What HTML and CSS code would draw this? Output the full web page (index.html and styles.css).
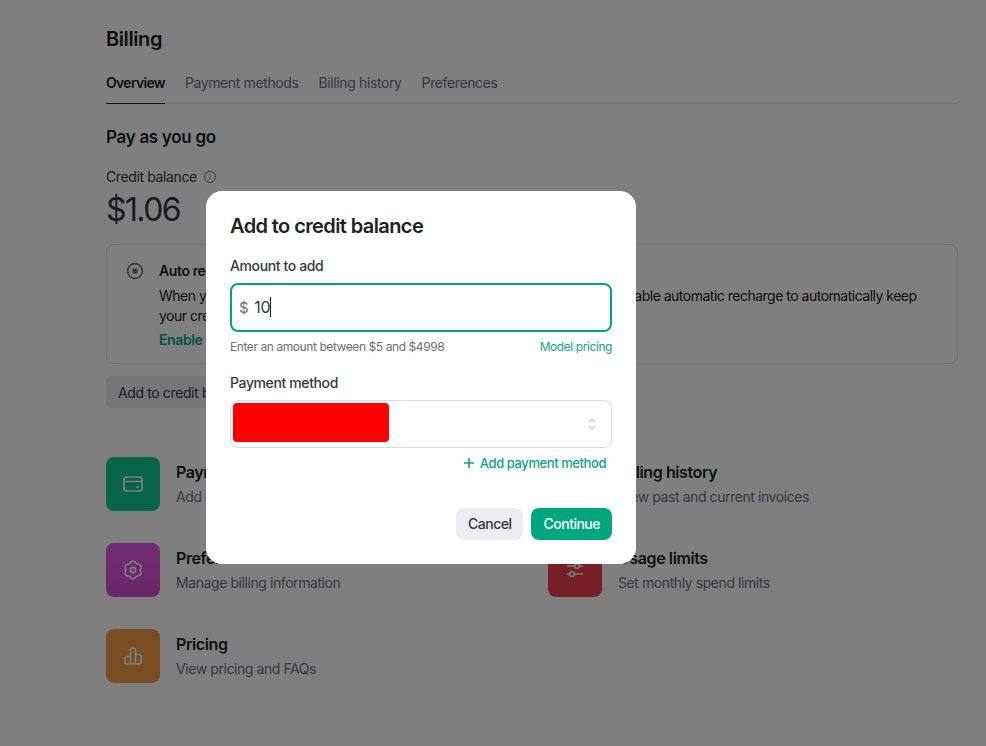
FILE: index.html
```html
<!DOCTYPE html>
<html>
<head>
  <title>Billing</title>
  <meta charset="UTF-8">
  <link rel="stylesheet" href="styles.css">
</head>
<body>
  <div class="page">
    <h1>Billing</h1>
    <div class="tabs">
      <a class="tab active">Overview</a>
      <a class="tab">Payment methods</a>
      <a class="tab">Billing history</a>
      <a class="tab">Preferences</a>
    </div>

    <h2>Pay as you go</h2>
    <div class="balance-label">
      Credit balance
      <svg width="14" height="14" viewBox="0 0 14 14" fill="none" stroke="currentColor" stroke-width="1">
        <circle cx="7" cy="7" r="5.5"/>
        <path d="M7 6.5v3M7 4.4v.8"/>
      </svg>
    </div>
    <div class="balance">$1.06</div>

    <div class="recharge">
      <svg class="recharge-icon" width="18" height="18" viewBox="0 0 18 18" fill="none" stroke="currentColor" stroke-width="1.6">
        <circle cx="9" cy="9" r="7.4"/>
        <rect x="6.5" y="6.5" width="5" height="5" rx="1" fill="currentColor" stroke="none"/>
      </svg>
      <div>
        <div class="recharge-title">Auto recharge is off</div>
        <p>When your credit balance reaches $0, your API requests will stop working. Enable automatic recharge to automatically keep your credit balance topped up.</p>
        <a class="recharge-link">Enable auto recharge</a>
      </div>
    </div>

    <button class="add-credit">Add to credit balance</button>

    <div class="cards">
      <div class="card">
        <div class="card-icon green">
          <svg width="20" height="20" viewBox="0 0 20 20" fill="none" stroke="currentColor" stroke-width="1.6">
            <rect x="1" y="3" width="18" height="14" rx="2.5"/>
            <path d="M1 7.5h18M13 13h3"/>
          </svg>
        </div>
        <div>
          <div class="card-title">Payment methods</div>
          <div class="card-sub">Add or change payment method</div>
        </div>
      </div>
      <div class="card">
        <div class="card-icon blue">
          <svg width="20" height="20" viewBox="0 0 20 20" fill="none" stroke="currentColor" stroke-width="1.6">
            <path d="M5 2h10v16l-2.500-1.500L10 18l-2.500-1.500L5 18z"/>
          </svg>
        </div>
        <div>
          <div class="card-title">Billing history</div>
          <div class="card-sub">View past and current invoices</div>
        </div>
      </div>
      <div class="card">
        <div class="card-icon purple">
          <svg width="20" height="20" viewBox="0 0 20 20" fill="none" stroke="currentColor" stroke-width="1.6" stroke-linejoin="round">
            <path d="M6.400 3.760Q10 -1.500 13.600 3.760Q19.960 4.250 17.200 10Q19.960 15.750 13.600 16.240Q10 21.500 6.400 16.240Q.040 15.750 2.800 10Q.040 4.250 6.400 3.760z"/>
            <circle cx="10" cy="10" r="2.600"/>
          </svg>
        </div>
        <div>
          <div class="card-title">Preferences</div>
          <div class="card-sub">Manage billing information</div>
        </div>
      </div>
      <div class="card">
        <div class="card-icon red">
          <svg width="20" height="20" viewBox="0 0 20 20" fill="none" stroke="currentColor" stroke-width="1.6">
            <circle cx="12" cy="6" r="2.300"/>
            <circle cx="7" cy="14" r="2.300"/>
            <path d="M2 6h7.700M14.300 6H18M2 14h2.700M9.300 14H18"/>
          </svg>
        </div>
        <div>
          <div class="card-title">Usage limits</div>
          <div class="card-sub">Set monthly spend limits</div>
        </div>
      </div>
      <div class="card">
        <div class="card-icon orange">
          <svg width="20" height="20" viewBox="0 0 20 20" fill="none" stroke="currentColor" stroke-width="1.6">
            <path d="M7.500 18V4a2 2 0 0 1 2-2h1a2 2 0 0 1 2 2v14zM12.500 18V8.500H16a2 2 0 0 1 2 2V16a2 2 0 0 1-2 2zM7.500 18V10.500H4a2 2 0 0 0-2 2V16a2 2 0 0 0 2 2z"/>
          </svg>
        </div>
        <div>
          <div class="card-title">Pricing</div>
          <div class="card-sub">View pricing and FAQs</div>
        </div>
      </div>
    </div>
  </div>

  <div class="overlay">
    <div class="modal">
      <div class="modal-title">Add to credit balance</div>

      <label>Amount to add</label>
      <div class="amount">
        <span class="dollar">$</span>
        <span class="amount-value">10</span>
        <span class="caret"></span>
      </div>
      <div class="amount-hint">
        <span>Enter an amount between $5 and $4998</span>
        <a>Model pricing</a>
      </div>

      <label class="method-label">Payment method</label>
      <div class="method">
        <div class="redacted"></div>
        <svg width="8" height="12" viewBox="0 0 8 12" fill="none" stroke="#c5c5d2" stroke-width="1.200">
          <path d="M1 4l3-3 3 3M1 8l3 3 3-3"/>
        </svg>
      </div>
      <div class="add-method">
        <svg width="12" height="12" viewBox="0 0 12 12" fill="none" stroke="currentColor" stroke-width="1.600">
          <path d="M6 1v10M1 6h10"/>
        </svg>
        Add payment method
      </div>

      <div class="modal-actions">
        <button class="btn-cancel">Cancel</button>
        <button class="btn-continue">Continue</button>
      </div>
    </div>
  </div>
</body>
</html>
```

FILE: styles.css
```css
body {
  margin: 0;
  height: 746px;
  overflow: hidden;
  background: #fff;
  color: #202123;
  font-family: Inter, "Liberation Sans", sans-serif;
  font-size: 14px;
  letter-spacing: -0.38px;
}
.page {
  width: 852px;
  margin-left: 106px;
  padding-top: 27px;
}
h1 {
  margin: 0;
  font-size: 20px;
  line-height: 24px;
  font-weight: 600;
  letter-spacing: -0.4px;
}
.tabs {
  display: flex;
  gap: 20px;
  margin-top: 22px;
  border-bottom: 1px solid #e5e5ea;
}
.tab {
  padding-bottom: 10px;
  margin-bottom: -1px;
  line-height: 20px;
  color: #6e6e80;
}
.tab.active {
  color: #202123;
  font-weight: 600;
  letter-spacing: -0.7px;
  border-bottom: 1px solid #202123;
}
h2 {
  margin: 22px 0 0;
  font-size: 17px;
  line-height: 22px;
  font-weight: 600;
  letter-spacing: -0.3px;
}
.balance-label {
  display: flex;
  align-items: center;
  gap: 6px;
  margin-top: 19px;
  line-height: 20px;
  color: #353740;
}
.balance-label svg {
  color: #6e6e80;
}
.balance {
  font-size: 32px;
  line-height: 40px;
  margin-top: 3px;
  color: #353740;
  letter-spacing: -1.6px;
}
.recharge {
  display: flex;
  gap: 15px;
  margin-top: 14px;
  padding: 15px 30px 13px 19px;
  border: 1px solid #e5e5ea;
  border-radius: 8px;
  line-height: 20px;
}
.recharge-icon {
  flex: none;
  margin-top: 2px;
  color: #6e6e80;
}
.recharge-title {
  font-weight: 600;
  line-height: 22px;
}
.recharge p {
  margin: 4px 0;
  letter-spacing: -0.5px;
}
.recharge-link {
  font-weight: 600;
  color: #10a37f;
}
.add-credit {
  display: block;
  margin-top: 12px;
  height: 32px;
  padding: 0 12px;
  border: none;
  border-radius: 5px;
  background: #ececf1;
  color: #353740;
  font: inherit;
  letter-spacing: inherit;
}
.cards {
  display: grid;
  grid-template-columns: 410px 410px;
  column-gap: 32px;
  row-gap: 32px;
  margin-top: 49px;
}
.card {
  display: flex;
  align-items: center;
  gap: 16px;
  height: 54px;
}
.card-icon {
  flex: none;
  display: flex;
  align-items: center;
  justify-content: center;
  width: 54px;
  height: 54px;
  border-radius: 8px;
  color: #fff;
}
.card-icon.green { background: #10c88f; }
.card-icon.blue { background: #3f7fe0; }
.card-icon.purple { background: linear-gradient(#e65ae8, #d04ed0); }
.card-icon.red { background: #ee3f4f; }
.card-icon.orange { background: #f59a45; }
.card-title {
  font-size: 16px;
  line-height: 24px;
  font-weight: 600;
  letter-spacing: -0.4px;
}
.card-sub {
  margin-top: 1px;
  line-height: 24px;
  color: #6e6e80;
  letter-spacing: -0.42px;
}
.overlay {
  position: fixed;
  inset: 0;
  box-sizing: border-box;
  display: flex;
  align-items: center;
  justify-content: center;
  padding: 8px 144px 0 0;
  background: rgba(0, 0, 0, 0.5);
}
.modal {
  box-sizing: border-box;
  width: 430px;
  height: 373px;
  padding: 22px 24px 24px;
  border-radius: 16px;
  background: #fff;
}
.modal-title {
  font-size: 20px;
  line-height: 26px;
  font-weight: 600;
  color: #202123;
  margin-bottom: 18px;
  letter-spacing: -0.6px;
}
label {
  display: block;
  font-weight: 500;
  line-height: 18px;
  color: #353740;
}
.amount {
  display: flex;
  align-items: center;
  box-sizing: border-box;
  height: 49px;
  margin-top: 8px;
  padding-left: 7px;
  border: 2px solid #00a37f;
  border-radius: 8px;
}
.dollar {
  color: #6e6e80;
  font-size: 15px;
  margin-right: 6px;
}
.amount-value {
  font-size: 16px;
  color: #353740;
  letter-spacing: -0.3px;
}
.caret {
  width: 1px;
  height: 20px;
  background: #202123;
}
.amount-hint {
  display: flex;
  justify-content: space-between;
  margin-top: 7px;
  font-size: 12px;
  line-height: 16px;
  color: #6e6e80;
  letter-spacing: -0.42px;
}
.amount-hint a {
  color: #10a37f;
}
.method-label {
  margin-top: 19px;
}
.method {
  display: flex;
  align-items: center;
  justify-content: space-between;
  box-sizing: border-box;
  height: 48px;
  margin-top: 8px;
  padding: 2px 15px 2px 2px;
  border: 1px solid #d9d9e3;
  border-radius: 8px;
}
.redacted {
  align-self: flex-start;
  width: 156px;
  height: 39px;
  border-radius: 4px;
  background: #f00;
}
.add-method {
  display: flex;
  align-items: center;
  justify-content: flex-end;
  gap: 5px;
  margin-top: 7px;
  padding-right: 6px;
  font-size: 13px;
  line-height: 16px;
  font-weight: 500;
  color: #10a37f;
  letter-spacing: -0.42px;
}
.modal-actions {
  display: flex;
  justify-content: flex-end;
  gap: 8px;
  margin-top: 37px;
}
.modal-actions button {
  height: 32px;
  padding: 0 12px;
  border: none;
  border-radius: 8px;
  font: inherit;
  font-weight: 500;
  letter-spacing: -0.5px;
}
.btn-cancel {
  background: #ececf1;
  color: #353740;
}
.btn-continue {
  background: #00a67e;
  color: #fff;
}
```
